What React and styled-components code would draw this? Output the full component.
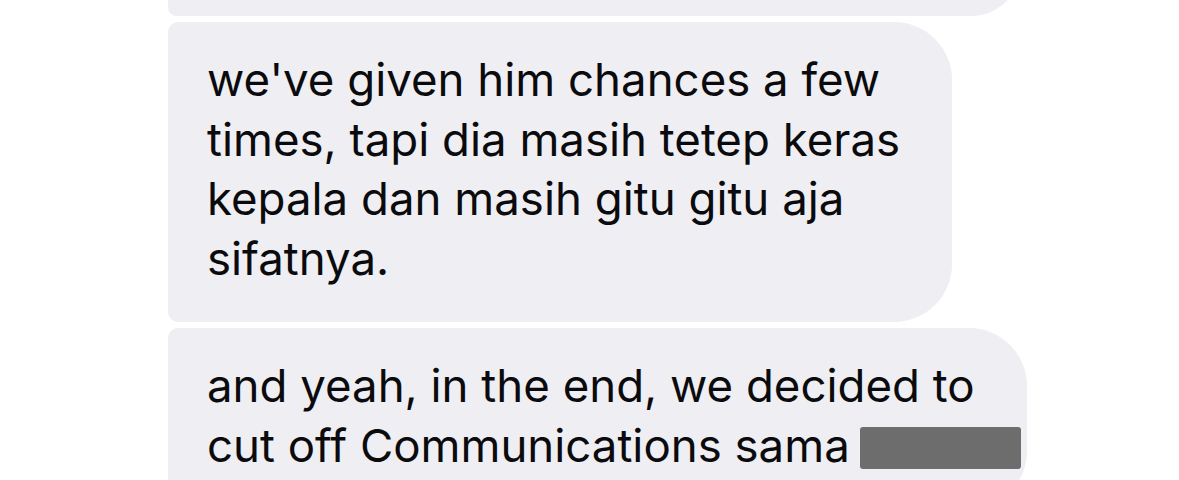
import React from "react";
import styled, { createGlobalStyle } from "styled-components";

const Global = createGlobalStyle`
  html, body { margin: 0; padding: 0; background: #ffffff; }
  body { overflow: hidden; height: 480px; }
`;

const Thread = styled.div`
  display: flex;
  flex-direction: column;
  align-items: flex-start;
  gap: 6px;
  padding-left: 168px;
  margin-top: -84px;
  font-family: Inter, "Noto Sans", sans-serif;
`;

const Bubble = styled.div`
  box-sizing: border-box;
  background: #eeeef3;
  color: #0b0b0e;
  font-size: 45.6px;
  line-height: 59.5px;
  letter-spacing: 0;
  padding: 28px 52px 34px 39px;
  border-radius: 10px 58px 58px 10px;
  width: ${(p) => (p.$width ? `${p.$width}px` : "auto")};
  height: ${(p) => (p.$height ? `${p.$height}px` : "auto")};
  white-space: nowrap;
`;

const Line = styled.div`
  display: block;
`;

const Redacted = styled.span`
  display: inline-block;
  width: 161px;
  height: 42px;
  margin-left: 10px;
  margin-right: -52px;
  vertical-align: -7px;
  background: #6d6d6e;
  border-radius: 3px;
`;

export default function App() {
  return (
    <>
      <Global />
      <Thread>
        <Bubble $width={853} $height={100} />
        <Bubble>
          <Line>we've given him chances a few</Line>
          <Line>times, tapi dia masih tetep keras</Line>
          <Line>kepala dan masih gitu gitu aja</Line>
          <Line>sifatnya.</Line>
        </Bubble>
        <Bubble>
          <Line>and yeah, in the end, we decided to</Line>
          <Line>
            cut off Communications sama
            <Redacted aria-label="redacted" />
          </Line>
        </Bubble>
      </Thread>
    </>
  );
}
